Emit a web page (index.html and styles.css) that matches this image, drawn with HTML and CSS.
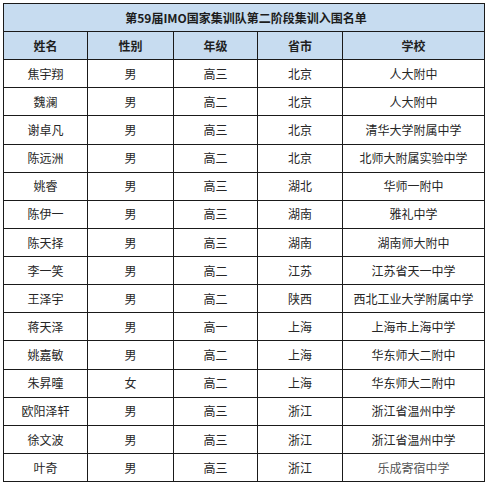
FILE: index.html
```html
<!DOCTYPE html>
<html lang="zh-CN">
<head>
<meta charset="utf-8">
<title>第59届IMO国家集训队第二阶段集训入围名单</title>
<link rel="stylesheet" href="styles.css">
</head>
<body>
<table class="roster">
  <colgroup>
    <col class="c-name"><col class="c-sex"><col class="c-grade"><col class="c-prov"><col class="c-school">
  </colgroup>
  <thead>
    <tr class="title-row"><th colspan="5">第59届IMO国家集训队第二阶段集训入围名单</th></tr>
    <tr class="head-row"><th>姓名</th><th>性别</th><th>年级</th><th>省市</th><th>学校</th></tr>
  </thead>
  <tbody>
    <tr><td>焦宇翔</td><td>男</td><td>高三</td><td>北京</td><td>人大附中</td></tr>
    <tr><td>魏澜</td><td>男</td><td>高二</td><td>北京</td><td>人大附中</td></tr>
    <tr><td>谢卓凡</td><td>男</td><td>高三</td><td>北京</td><td>清华大学附属中学</td></tr>
    <tr><td>陈远洲</td><td>男</td><td>高二</td><td>北京</td><td>北师大附属实验中学</td></tr>
    <tr><td>姚睿</td><td>男</td><td>高三</td><td>湖北</td><td>华师一附中</td></tr>
    <tr><td>陈伊一</td><td>男</td><td>高三</td><td>湖南</td><td>雅礼中学</td></tr>
    <tr><td>陈天择</td><td>男</td><td>高三</td><td>湖南</td><td>湖南师大附中</td></tr>
    <tr><td>李一笑</td><td>男</td><td>高二</td><td>江苏</td><td>江苏省天一中学</td></tr>
    <tr><td>王泽宇</td><td>男</td><td>高二</td><td>陕西</td><td>西北工业大学附属中学</td></tr>
    <tr><td>蒋天泽</td><td>男</td><td>高一</td><td>上海</td><td>上海市上海中学</td></tr>
    <tr><td>姚嘉敏</td><td>男</td><td>高二</td><td>上海</td><td>华东师大二附中</td></tr>
    <tr><td>朱昇曈</td><td>女</td><td>高二</td><td>上海</td><td>华东师大二附中</td></tr>
    <tr><td>欧阳泽轩</td><td>男</td><td>高三</td><td>浙江</td><td>浙江省温州中学</td></tr>
    <tr><td>徐文波</td><td>男</td><td>高三</td><td>浙江</td><td>浙江省温州中学</td></tr>
    <tr><td>叶奇</td><td>男</td><td>高三</td><td>浙江</td><td><span class="watermark">乐成寄宿中学</span></td></tr>
  </tbody>
</table>
</body>
</html>
```

FILE: styles.css
```css
html, body {
  margin: 0;
  padding: 0;
  background: #ffffff;
}

body {
  padding: 3px 0 0 3px;
  font-family: "Noto Sans CJK SC", "Noto Sans", sans-serif;
  font-size: 12px;
  color: #262626;
}

.roster {
  border-collapse: collapse;
  table-layout: fixed;
  width: 481px;
  border: 1px solid #111;
}

.c-name { width: 84px; }
.c-sex { width: 86px; }
.c-grade { width: 84px; }
.c-prov { width: 85px; }
.c-school { width: 142px; }

.roster th,
.roster td {
  border: 1px solid #1a1a1a;
  height: 27px;
  padding: 0;
  text-align: center;
  vertical-align: middle;
  line-height: 16px;
  white-space: nowrap;
}

.roster tbody tr:nth-child(odd) td {
  height: 27.3px;
}

.title-row th {
  background: #c7dcf0;
  font-weight: 700;
  color: #1c1c1c;
  padding-left: 4px;
}

.head-row th {
  background: #c7dcf0;
  font-weight: 700;
  color: #1f1f1f;
}

.watermark {
  color: #555;
}
```
